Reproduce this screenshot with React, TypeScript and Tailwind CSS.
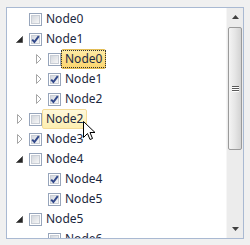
import React from "react";

type Node = {
  label: string;
  level: number;
  expander?: "open" | "closed";
  checked?: boolean;
  state?: "selected" | "hover";
};

const nodes: Node[] = [
  { label: "Node0", level: 0 },
  { label: "Node1", level: 0, expander: "open", checked: true },
  { label: "Node0", level: 1, expander: "closed", state: "selected" },
  { label: "Node1", level: 1, expander: "closed", checked: true },
  { label: "Node2", level: 1, expander: "closed", checked: true },
  { label: "Node2", level: 0, expander: "closed", state: "hover" },
  { label: "Node3", level: 0, expander: "closed", checked: true },
  { label: "Node4", level: 0, expander: "open" },
  { label: "Node4", level: 1, checked: true },
  { label: "Node5", level: 1, checked: true },
  { label: "Node5", level: 0, expander: "open" },
  { label: "Node6", level: 1 },
];

function Expander({ kind }: { kind?: "open" | "closed" }) {
  return (
    <span className="w-[19px] h-[20px] shrink-0 relative">
      {kind === "closed" && (
        <svg className="absolute left-[7px] top-[5px]" width="6" height="10" viewBox="0 0 6 10">
          <path d="M0.5 0.5 L5 5 L0.5 9.5 Z" fill="#fff" stroke="#a6a6a6" />
        </svg>
      )}
      {kind === "open" && (
        <svg className="absolute left-[6px] top-[7px]" width="7" height="7" viewBox="0 0 7 7">
          <path d="M6.5 0.5 L6.5 6.5 L0.5 6.5 Z" fill="#262626" stroke="#595959" />
        </svg>
      )}
    </span>
  );
}

function CheckBox({ checked }: { checked?: boolean }) {
  return (
    <span className="w-[13px] h-[13px] shrink-0 border border-[#97a5bb] bg-white p-[1px] relative">
      <span className="block w-full h-full border border-[#c9ced6] bg-gradient-to-br from-[#d4d8de] to-[#f7f7f7]" />
      {checked && (
        <svg className="absolute left-0 top-0" width="11" height="11" viewBox="0 0 11 11">
          <path d="M2.2 5.6 L4.4 8 L8.8 2.2" fill="none" stroke="#31488a" strokeWidth="2" />
        </svg>
      )}
    </span>
  );
}

function Row({ node }: { node: Node }) {
  let box = "border border-transparent";
  if (node.state === "selected")
    box = "border border-[#e3bd55] bg-gradient-to-b from-[#fdeaa6] to-[#fcd56c] rounded-[2px]";
  if (node.state === "hover")
    box = "border border-[#f4dc98] bg-gradient-to-b from-[#fff8da] to-[#fdeeb0] rounded-[2px]";

  return (
    <div className="h-[20px] flex items-center">
      <span className="shrink-0" style={{ width: node.level * 19 }} />
      <Expander kind={node.expander} />
      <CheckBox checked={node.checked} />
      <span className={`h-[20px] flex items-center ${box}`}>
        <span
          className={`px-[3px] h-[16px] flex items-center leading-none ${
            node.state === "selected" ? "outline-1 outline-dotted outline-[#333]" : ""
          }`}
        >
          {node.label}
        </span>
      </span>
    </div>
  );
}

function ScrollBar() {
  return (
    <div className="w-[17px] shrink-0 flex flex-col bg-[#ececec] border-l border-[#f6f6f6]">
      <div className="h-[18px] flex items-center justify-center">
        <svg width="7" height="4" viewBox="0 0 7 4">
          <path d="M3.5 0 L7 4 L0 4 Z" fill="#404040" />
        </svg>
      </div>
      <div className="mx-[1px] mt-[1px] h-[123px] rounded-[2px] border border-[#9a9a9a] bg-gradient-to-r from-[#f4f4f4] via-[#e6e6e6] to-[#d3d3d3] flex items-center justify-center">
        <div className="flex flex-col gap-[1px]">
          <span className="block w-[7px] h-[1px] bg-[#5a5a5a] shadow-[0_1px_0_#fff]" />
          <span className="block w-[7px] h-[1px] bg-[#5a5a5a] shadow-[0_1px_0_#fff]" />
          <span className="block w-[7px] h-[1px] bg-[#5a5a5a] shadow-[0_1px_0_#fff]" />
        </div>
      </div>
      <div className="flex-1" />
      <div className="h-[18px] flex items-center justify-center">
        <svg width="7" height="4" viewBox="0 0 7 4">
          <path d="M0 0 L7 0 L3.5 4 Z" fill="#404040" />
        </svg>
      </div>
    </div>
  );
}

export default function App() {
  return (
    <div className="w-[250px] h-[245px] bg-[#f0f0f0] pt-[7px] pl-[6px] relative">
      <div className="w-[238px] h-[232px] border border-[#a9b9d2] bg-white flex overflow-hidden">
        <div
          className="flex-1 pt-[1px] pl-[3px] overflow-hidden text-[12px] text-[#1c2840]"
          style={{ fontFamily: '"Noto Sans", "Open Sans", sans-serif' }}
        >
          {nodes.map((n, i) => (
            <Row key={i} node={n} />
          ))}
        </div>
        <ScrollBar />
      </div>

      {/* mouse pointer hovering Node2 */}
      <svg className="absolute left-[83px] top-[121px]" width="13" height="21" viewBox="0 0 13 21">
        <path
          d="M0.5 0.5 L0.5 16.5 L4.5 12.5 L7 18.5 L9.5 17.5 L7 11.5 L12 11.5 Z"
          fill="#fff"
          stroke="#000"
          strokeLinejoin="miter"
        />
      </svg>
    </div>
  );
}
